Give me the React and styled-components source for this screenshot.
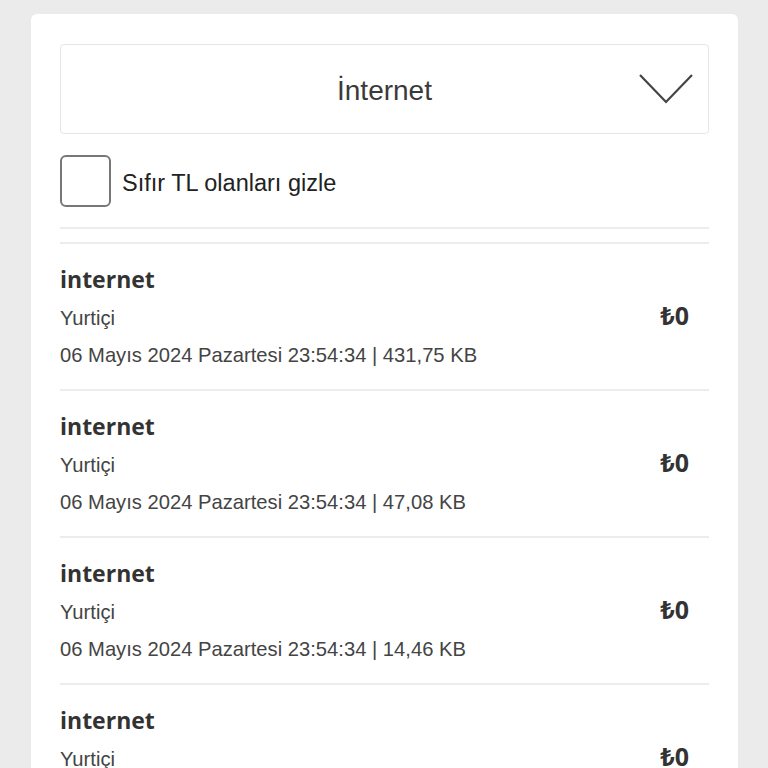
import React from "react";
import styled, { createGlobalStyle } from "styled-components";

const Global = createGlobalStyle`
  html, body { margin: 0; padding: 0; background: #ebebeb; }
  body { font-family: "Liberation Sans", Arial, sans-serif; color: #333; overflow: hidden; }
`;

const Card = styled.div`
  margin: 14px 30px 0 31px;
  background: #fff;
  border-radius: 6px;
  padding: 30px 29px 0 29px;
  min-height: 760px;
  box-sizing: border-box;
`;

const Select = styled.div`
  height: 90px;
  box-sizing: border-box;
  border: 1.5px solid #e6e6e6;
  border-radius: 4px;
  display: flex;
  align-items: center;
  justify-content: center;
  padding-top: 4px;
  position: relative;
  font-size: 28px;
  color: #3a3a3a;
`;

const Chevron = styled.svg`
  position: absolute;
  right: 15px;
  top: 29px;
`;

const CheckRow = styled.label`
  display: flex;
  align-items: center;
  margin-top: 21px;
  gap: 11px;
  font-size: 23.5px;
  color: #222;
`;

const CheckText = styled.span`
  padding-top: 4px;
`;

const Box = styled.span`
  width: 51px;
  height: 52px;
  box-sizing: border-box;
  border: 2px solid #777;
  border-radius: 6px;
  display: block;
`;

const Rule = styled.div`
  height: 2px;
  background: #ececec;
  margin-top: ${(p) => p.$top}px;
`;

const Item = styled.div`
  display: flex;
  align-items: center;
  justify-content: space-between;
  border-bottom: 2px solid #ececec;
  padding: 21px 20px 21px 0;
  height: 147px;
  box-sizing: border-box;
`;

const Info = styled.div`
  display: flex;
  flex-direction: column;
  padding-top: 4px;
`;

const Title = styled.div`
  font-family: "Open Sans", sans-serif;
  font-weight: 700;
  font-size: 23px;
  line-height: 30px;
  color: #333;
`;

const Sub = styled.div`
  font-size: 20.2px;
  line-height: 37px;
  color: #444;
  margin-top: ${(p) => p.$mt || 0}px;
`;

const Amount = styled.div`
  font-family: "Noto Sans", sans-serif;
  font-weight: 700;
  font-size: 25px;
  color: #333;
  margin-bottom: 4px;
`;

const items = ["431,75 KB", "47,08 KB", "14,46 KB", "12,10 KB"];

export default function App() {
  return (
    <>
      <Global />
      <Card>
        <Select>
          İnternet
          <Chevron width="54" height="30" viewBox="0 0 54 30">
            <polyline points="1,1 27,28 53,1" fill="none" stroke="#444" strokeWidth="2.2" />
          </Chevron>
        </Select>
        <CheckRow>
          <Box />
          <CheckText>Sıfır TL olanları gizle</CheckText>
        </CheckRow>
        <Rule $top={20} />
        <Rule $top={13} />
        {items.map((kb, i) => (
          <Item key={i}>
            <Info>
              <Title>internet</Title>
              <Sub $mt={6}>Yurtiçi</Sub>
              <Sub>06 Mayıs 2024 Pazartesi 23:54:34 | {kb}</Sub>
            </Info>
            <Amount>₺0</Amount>
          </Item>
        ))}
      </Card>
    </>
  );
}
